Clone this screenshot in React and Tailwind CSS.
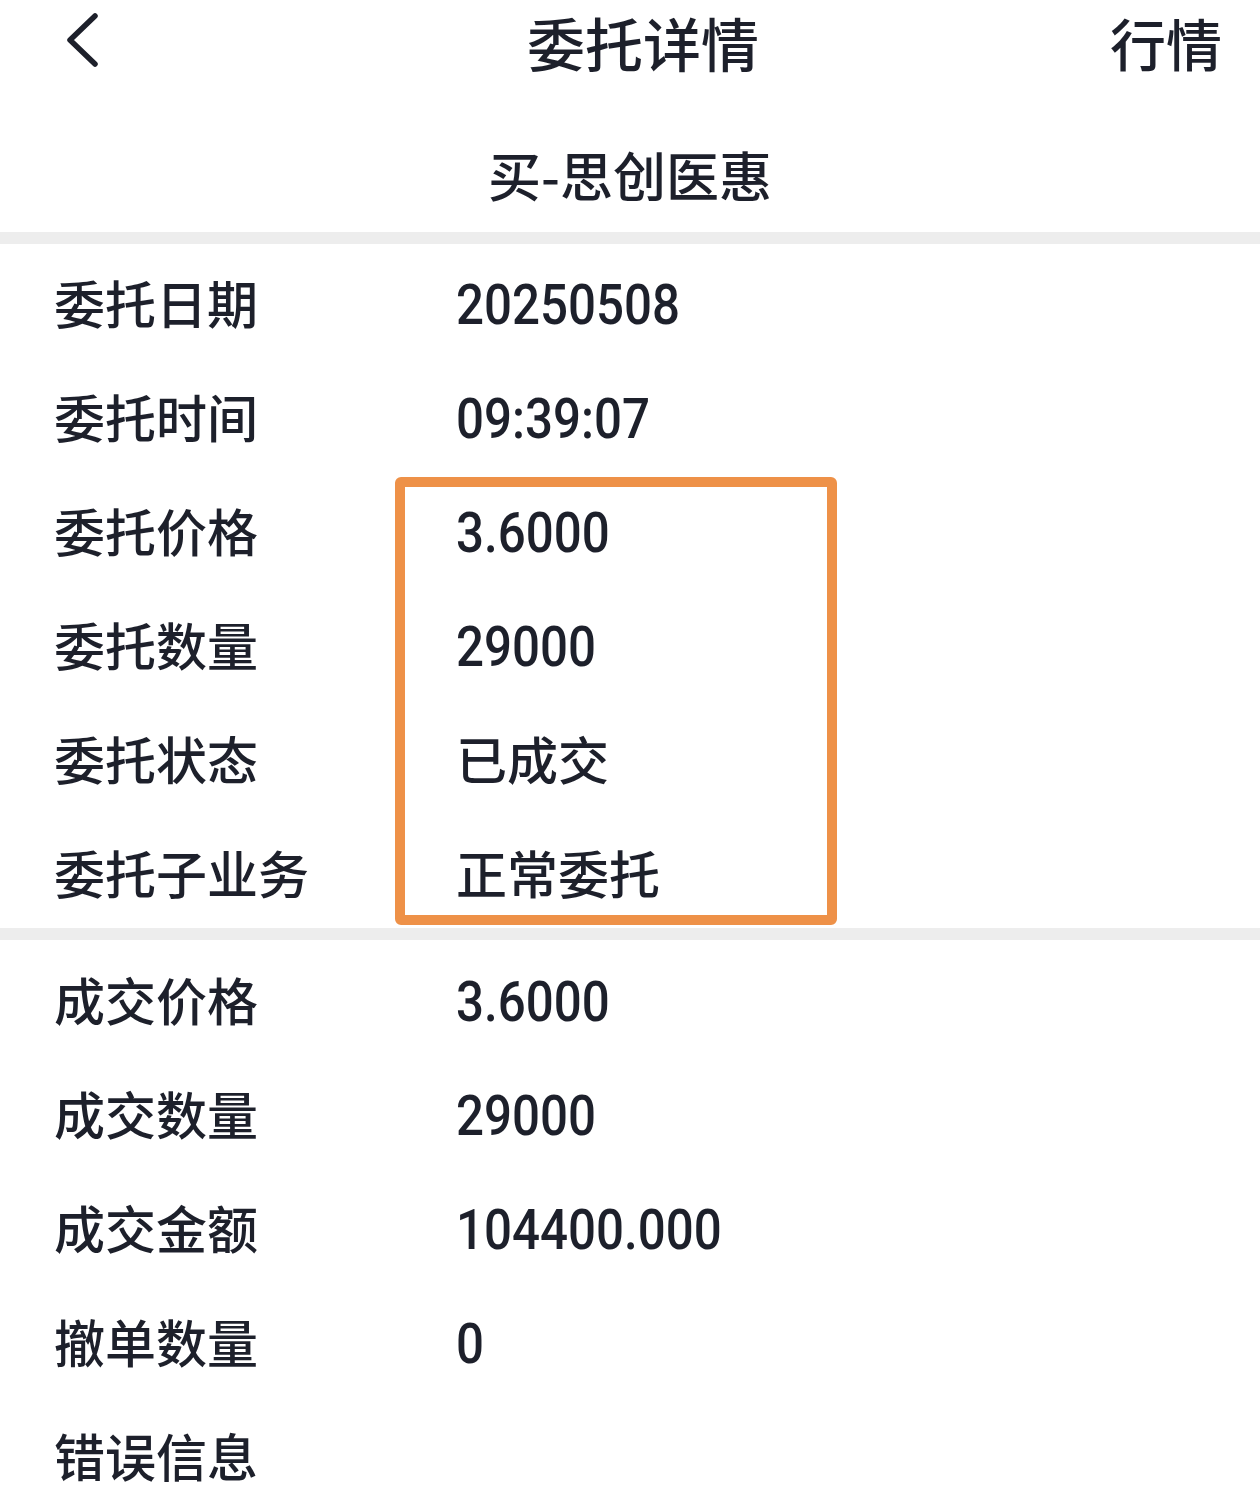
import React from "react";

const cjk = { fontFamily: '"Noto Sans CJK SC", "Noto Sans", sans-serif' };
const num = { fontFamily: '"Roboto", "Noto Sans CJK SC", sans-serif' };

const orderRows = [
  { label: "委托日期", value: "20250508" },
  { label: "委托时间", value: "09:39:07" },
  { label: "委托价格", value: "3.6000" },
  { label: "委托数量", value: "29000" },
  { label: "委托状态", value: "已成交", cjk: true },
  { label: "委托子业务", value: "正常委托", cjk: true },
];

const dealRows = [
  { label: "成交价格", value: "3.6000" },
  { label: "成交数量", value: "29000" },
  { label: "成交金额", value: "104400.000" },
  { label: "撤单数量", value: "0" },
  { label: "错误信息", value: "" },
];

const Row = ({ row }) => (
  <div className="flex items-center h-[114px]">
    <div className="w-[456px] shrink-0 pl-[54px] -mt-[5px] text-[51px] font-medium text-[#1d202b] whitespace-nowrap" style={cjk}>
      {row.label}
    </div>
    {row.cjk ? (
      <div className="-mt-[5px] text-[51px] font-medium text-[#1d202b] whitespace-nowrap" style={cjk}>
        {row.value}
      </div>
    ) : (
      <div
        className="text-[56px] font-medium text-[#1d202b] whitespace-nowrap origin-left scale-x-[0.88]"
        style={num}
      >
        {row.value}
      </div>
    )}
  </div>
);

export default function App() {
  return (
    <div className="w-[1260px] h-[1499px] bg-white overflow-hidden text-[#1d202b]">
      {/* top bar */}
      <div className="relative flex items-center justify-center h-[90px]">
        <div className="absolute left-[62px] top-[10px]">
          <svg width="44" height="60" viewBox="0 0 44 60">
            <polyline
              points="33,6 8,30 33,54"
              fill="none"
              stroke="#1d202b"
              strokeWidth="5.5"
              strokeLinecap="round"
              strokeLinejoin="round"
            />
          </svg>
        </div>
        <div className="ml-[26px] -mt-[6px] text-[58px] font-medium leading-none" style={cjk}>
          委托详情
        </div>
        <div className="absolute right-[38px] top-[14px] text-[56px] font-medium leading-none" style={cjk}>
          行情
        </div>
      </div>

      <div className="flex justify-center items-center h-[142px] pt-[26px]">
        <div className="text-[53px] font-medium leading-none" style={cjk}>
          买-思创医惠
        </div>
      </div>

      <div className="h-3 bg-[#ededed]" />

      <div className="relative h-[684px] pt-1">
        {orderRows.map((r, i) => (
          <Row key={i} row={r} />
        ))}
        <div className="absolute left-[395px] top-[233px] w-[442px] h-[448px] border-[10px] border-[#ee9148] rounded-[6px]" />
      </div>

      <div className="relative h-3 bg-[#ededed]" />

      <div className="pt-[5px]">
        {dealRows.map((r, i) => (
          <Row key={i} row={r} />
        ))}
      </div>
    </div>
  );
}
